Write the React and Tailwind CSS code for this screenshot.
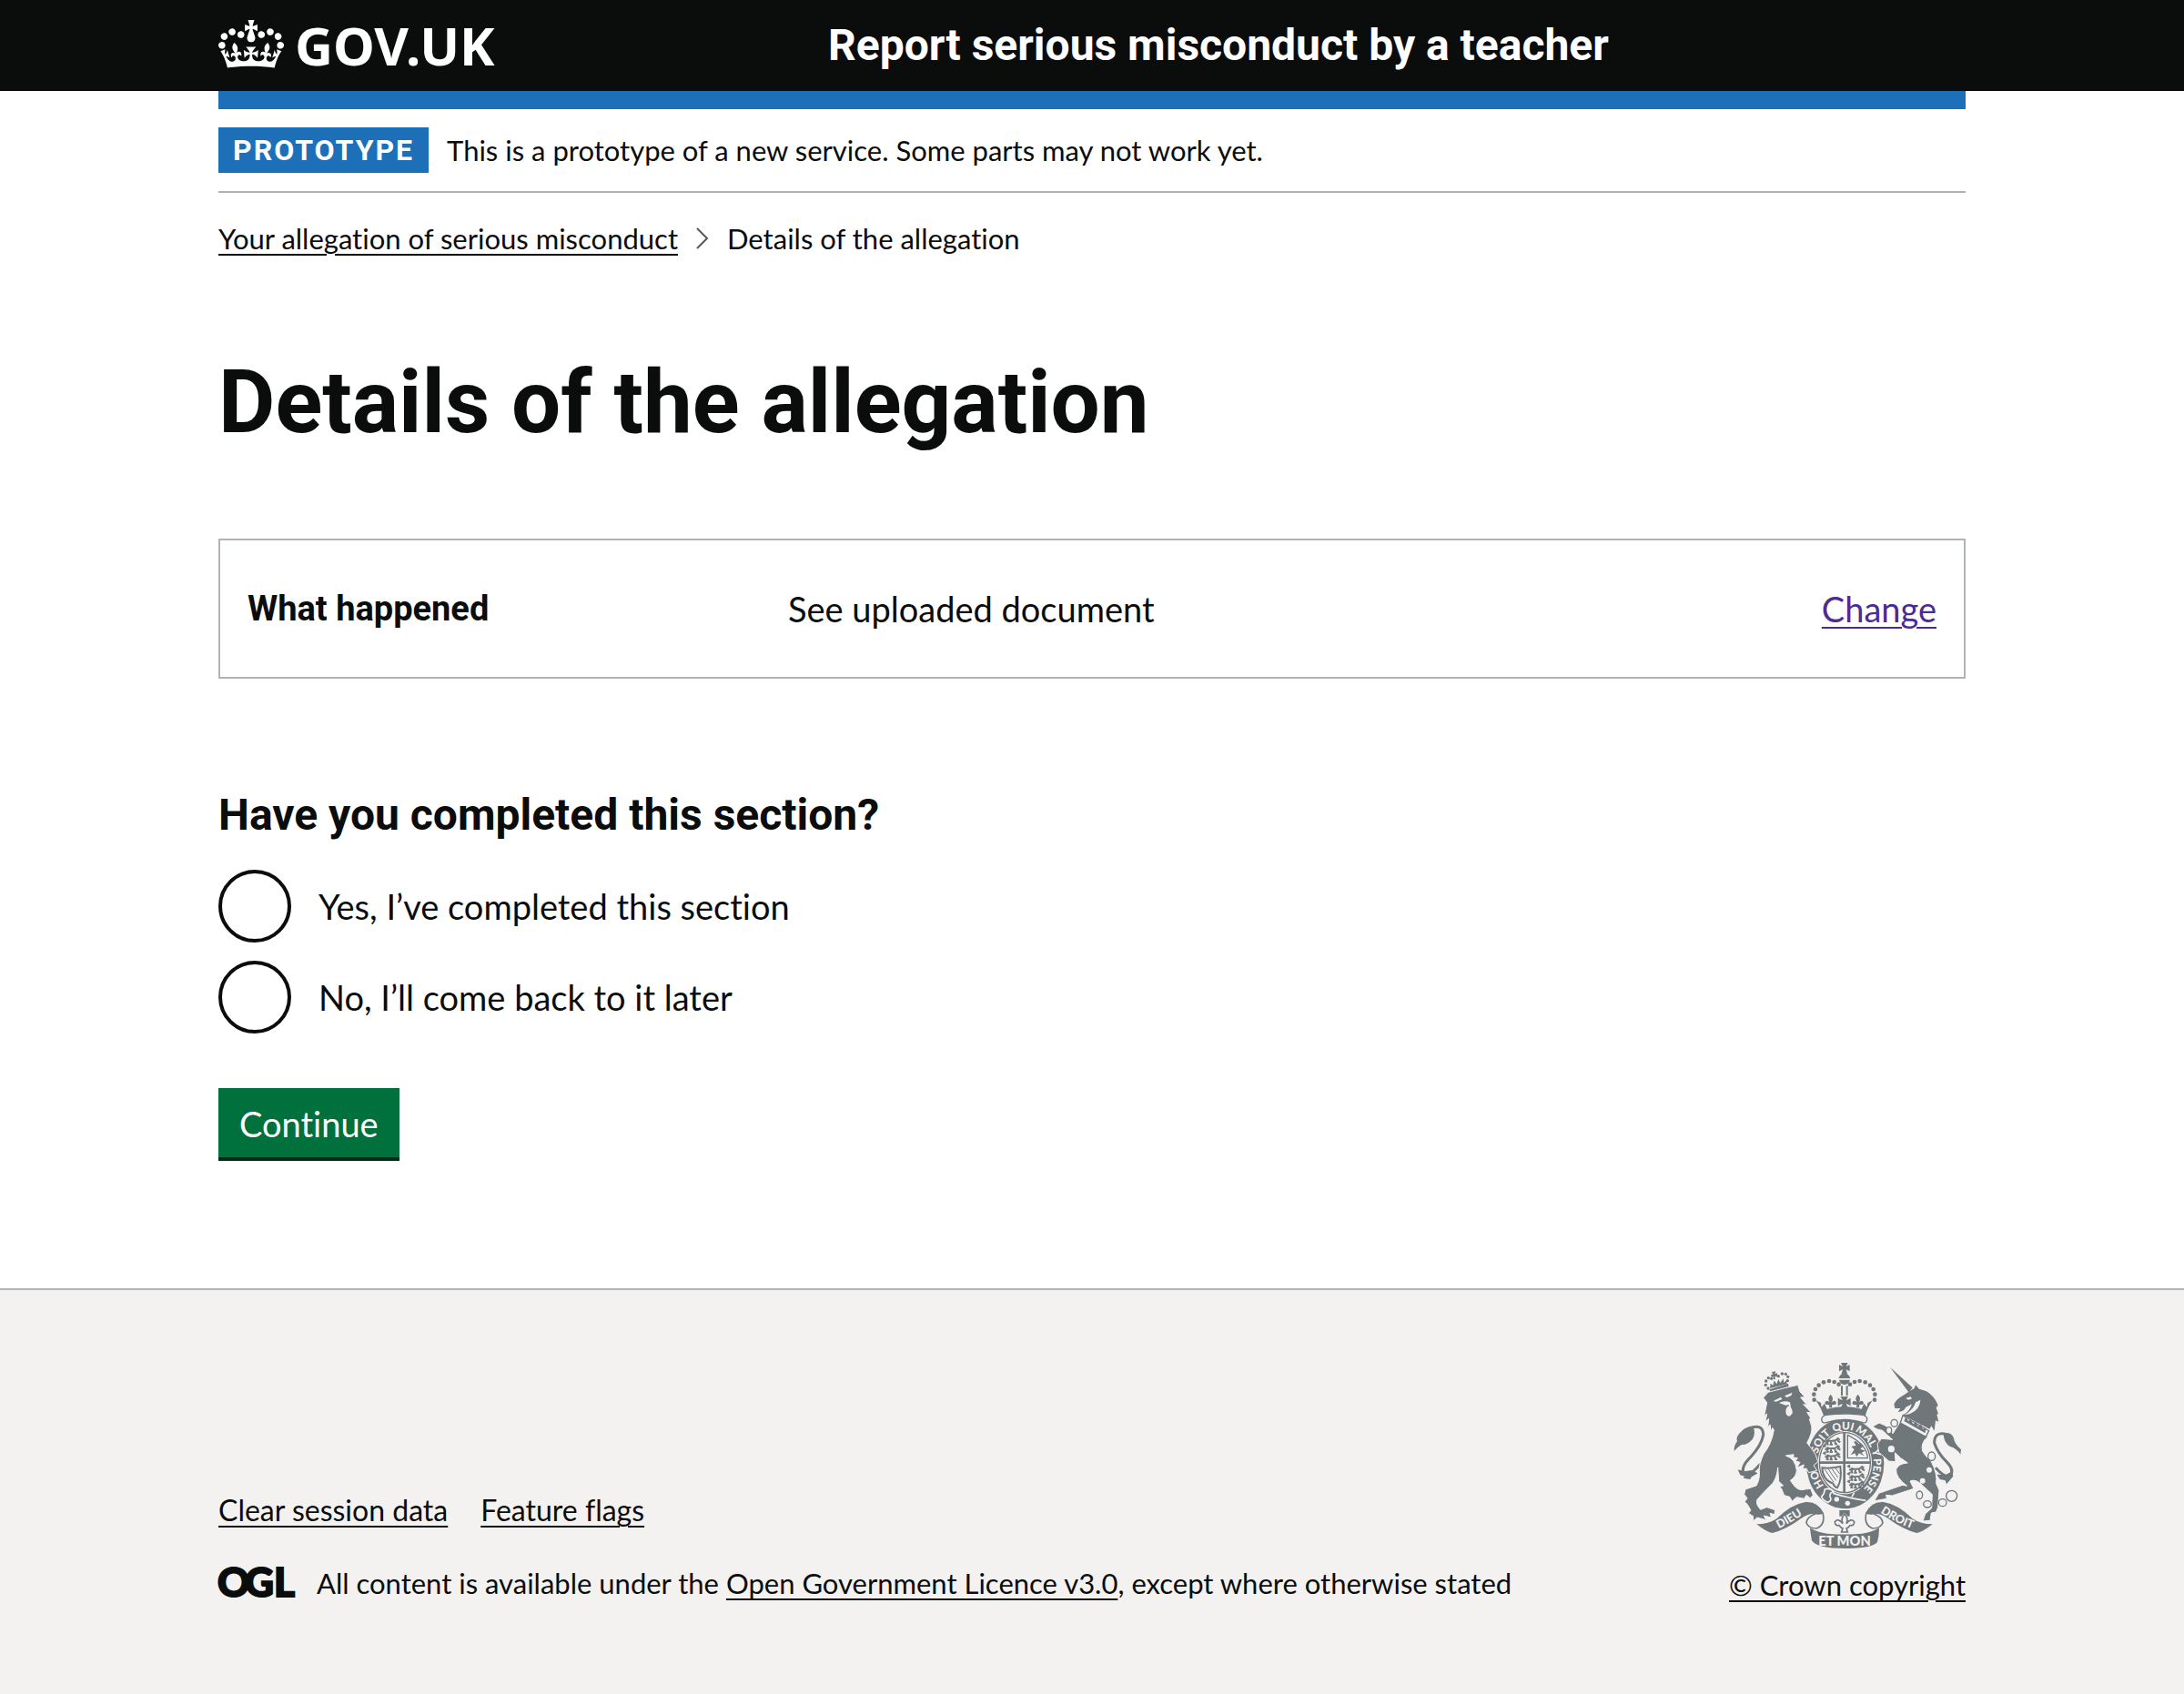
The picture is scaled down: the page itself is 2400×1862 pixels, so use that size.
import React from "react";

const LINK = "underline decoration-2 underline-offset-[5px]";
const INK = "#70777b";
const PAPER = "#f3f2f1";

function Crown() {
  return (
    <svg viewBox="0 0 132 97" className="mb-1 h-[53px] w-[72px] fill-white" aria-hidden="true">
      <path
        fillRule="evenodd"
        d="M25 30.2c3.5 1.5 7.7-.2 9.1-3.7 1.5-3.6-.2-7.8-3.9-9.2-3.6-1.4-7.6.3-9.1 3.9-1.4 3.5.3 7.5 3.9 9zM9 39.5c3.6 1.5 7.8-.2 9.2-3.7 1.5-3.6-.2-7.8-3.9-9.1-3.6-1.5-7.6.2-9.1 3.8-1.4 3.5.3 7.5 3.8 9zM4.4 57.2c3.5 1.5 7.7-.2 9.1-3.8 1.5-3.6-.2-7.7-3.9-9.1-3.5-1.5-7.6.3-9.1 3.8-1.4 3.5.3 7.6 3.9 9.1zm38.3-21.4c3.5 1.5 7.7-.2 9.1-3.8 1.5-3.6-.2-7.7-3.9-9.1-3.6-1.5-7.6.3-9.1 3.8-1.3 3.6.4 7.7 3.9 9.1zm64.4-5.6c-3.6 1.5-7.8-.2-9.1-3.7-1.5-3.6.2-7.8 3.8-9.2 3.6-1.4 7.7.3 9.2 3.9 1.3 3.5-.4 7.5-3.9 9zm15.9 9.3c-3.6 1.5-7.7-.2-9.1-3.7-1.5-3.6.2-7.8 3.7-9.1 3.6-1.5 7.7.2 9.2 3.8 1.5 3.5-.3 7.5-3.8 9zm4.7 17.7c-3.6 1.5-7.8-.2-9.2-3.8-1.5-3.6.2-7.7 3.9-9.1 3.6-1.5 7.7.3 9.2 3.8 1.3 3.5-.4 7.6-3.9 9.1zM89.3 35.8c-3.6 1.5-7.8-.2-9.2-3.8-1.4-3.6.2-7.7 3.9-9.1 3.6-1.5 7.7.3 9.2 3.8 1.4 3.6-.3 7.7-3.9 9.1zM69.7 17.7l8.9 4.7V9.3l-8.9 2.8c-.2-.3-.5-.6-.9-.9L72.4 0H59.6l3.5 11.2c-.3.3-.6.5-.9.9l-8.8-2.8v13.1l8.8-4.7c.3.3.6.7.9.9l-5 15.4v.1c-.2.8-.4 1.6-.4 2.4 0 4.1 3.1 7.5 7 8.1h.2c.3 0 .7.1 1 .1.4 0 .7 0 1-.1h.2c4-.6 7.1-4.1 7.1-8.1 0-.8-.1-1.7-.4-2.4V34l-5.1-15.4c.4-.2.7-.6 1-.9zM66 92.8c16.9 0 32.8 1.1 47.1 3.2 4-16.9 8.9-26.7 14-33.5l-9.6-3.4c1 4.9 1.1 7.2 0 10.2-1.5-1.4-3-4.3-4.2-8.7L108.6 76c2.8-2 5-3.2 7.5-3.3-4.4 9.4-10 11.9-13.6 11.2-4.3-.8-6.3-4.6-5.6-7.9 1-4.7 5.7-5.9 8-.5 4.3-8.7-3-11.4-7.6-8.8 7.1-7.2 7.9-13.5 2.1-21.1-8 6.1-8.1 12.3-4.5 20.8-4.7-5.4-12.1-2.5-9.5 6.2 3.4-5.2 7.9-2 7.2 3.1-.6 4.3-6.4 7.8-13.5 7.2-10.3-.9-10.9-8-11.2-13.8 2.5-.5 7.1 1.8 11 7.3L80.2 60c-4.1 4.4-8 5.3-12.3 5.4 1.4-4.4 8-11.6 8-11.6H55.5s6.4 7.2 7.9 11.6c-4.2-.1-8-1-12.3-5.4l1.4 16.4c3.9-5.5 8.5-7.7 10.9-7.3-.3 5.8-.9 12.8-11.1 13.8-7.2.6-12.9-2.9-13.5-7.2-.7-5 3.8-8.3 7.1-3.1 2.7-8.7-4.6-11.6-9.4-6.2 3.7-8.5 3.6-14.7-4.6-20.8-5.8 7.6-5 13.9 2.2 21.1-4.7-2.6-11.9.1-7.7 8.8 2.3-5.5 7.1-4.2 8.1.5.7 3.3-1.3 7.1-5.7 7.9-3.5.7-9-1.8-13.5-11.2 2.5.1 4.7 1.3 7.5 3.3l-4.7-15.4c-1.2 4.4-2.7 7.2-4.3 8.7-1.1-3-.9-5.3 0-10.2l-9.5 3.4c5 6.9 9.9 16.7 14 33.5 14.8-2.1 30.8-3.2 47.7-3.2z"
      />
    </svg>
  );
}

const CROWN_BEADS = [
  [338, 176], [337, 158], [342, 141], [353, 128], [369, 118], [387, 114], [404, 117], [419, 125],
];
const SMALL_BEADS = [
  [186, 138], [178, 127], [179, 114], [187, 104], [197, 106], [220, 98], [232, 90], [244, 91], [251, 100], [250, 113],
];
const RINGS = [
  [602, 253, 11, 12], [584, 277, 9, 11], [592, 338, 13, 13], [725, 362, 12, 14],
  [685, 490, 10, 13], [711, 520, 13, 11], [761, 515, 13, 12], [791, 493, 18, 18],
];
const LION_ROWS = [300, 325, 350];

function Fleur({ x, y }) {
  return (
    <path
      transform={`translate(${x} ${y})`}
      d="M0 -20 Q13 -6 3 6 Q14 -4 19 8 Q18 16 10 13 Q8 16 4 14 L5 24 L-5 24 L-4 14 Q-8 16 -10 13 Q-18 16 -19 8 Q-14 -4 -3 6 Q-13 -6 0 -20Z"
    />
  );
}

function Passant({ x, y }) {
  return (
    <path
      transform={`translate(${x} ${y})`}
      fill="none"
      stroke={INK}
      strokeWidth="6"
      d="M0 4 L8 -3 L18 0 L34 -2 L42 -9 L48 -4 M10 0 L6 10 L12 11 M20 2 L18 11 L25 11 M32 0 L34 10 L40 10 M40 -2 L50 4 M2 -6 L-4 -10 L2 -14"
    />
  );
}

function RoyalArms() {
  return (
    <svg viewBox="72 54 750 612" className="h-[204px] w-[250px]" fill={INK} aria-hidden="true">
      {/* lion's tail and crown */}
      <path d="M74 345 Q72 330 84 312 Q78 298 98 280 Q112 262 137 266 Q146 285 135 305 Q118 325 98 324 Q85 332 74 345Z" />
      <path d="M122 270 Q170 252 170 292 Q165 325 128 365 Q92 400 108 422 Q125 430 160 388" fill="none" stroke={INK} strokeWidth="9" />
      <path d="M86 406 L108 412 L132 408 L152 418 L132 430 L126 438 L104 434 L108 428 L94 424Z" />
      <path d="M190 142 L252 122 L254 132 L194 152Z" />
      <path d="M192 138 L194 122 L202 128 L206 112 L214 124 L220 108 L226 120 L236 106 L238 120 L246 112 L248 124Z" />
      <path d="M198 84 L211 82 L208 90 L216 88 L216 100 L208 98 L210 108 L203 108 L203 99 L196 102 L196 92 L202 92Z" />
      {SMALL_BEADS.map(([x, y]) => <circle key={x} cx={x} cy={y} r="5" />)}
      {/* central crown */}
      <path d="M426 54 L449 54 L443 66 L455 60 L455 82 L443 76 L447 90 L428 90 L432 76 L420 82 L420 60 L432 66Z" />
      <path d="M418 105 Q424 90 437 88 Q452 90 457 105Z" />
      <path d="M420 110 H456 Q453 124 437 126 Q423 124 420 110Z" />
      <path d="M426 130 H432 V162 H426Z M443 130 H449 V162 H443Z" />
      <path d="M424 165 L450 165 L443 178 L458 170 L458 196 L443 188 L450 204 L424 204 L432 188 L416 196 L416 170 L432 178Z" />
      {CROWN_BEADS.map(([x, y]) => (
        <g key={y}>
          <circle cx={x} cy={y} r="7" />
          <circle cx={875 - x} cy={y} r="7" />
        </g>
      ))}
      <Fleur x={392} y={178} />
      <Fleur x={482} y={178} />
      <path d="M344 178 L360 186 L362 200 L372 188 L380 206 Q437 190 494 206 L502 188 L512 200 L514 186 L530 178 Q512 205 506 230 Q437 212 370 230 Q362 205 344 178Z" />
      {/* garter */}
      <ellipse cx="440" cy="386" rx="128" ry="149" />
      <path d="M376 226 Q437 218 500 226 Q514 232 512 242 Q510 256 496 250 Q437 232 380 250 Q364 256 362 242 Q362 230 376 226Z" fill={PAPER} stroke={INK} strokeWidth="4" />
      <ellipse cx="439" cy="383" rx="89" ry="104" fill={PAPER} />
      <ellipse cx="439" cy="383" rx="84" ry="99" fill="none" stroke={INK} strokeWidth="4" />
      <path d="M437 284 V482 M354 383 H524" stroke={INK} strokeWidth="8" />
      {LION_ROWS.map((y) => (
        <g key={y}>
          <Passant x={374} y={y + 12} />
          <Passant x={454} y={y + 105} />
        </g>
      ))}
      <path d="M448 292 V368 H514 Q512 322 448 292Z" fill="none" stroke={INK} strokeWidth="4" />
      <path d="M458 358 L470 340 L460 330 L476 326 L468 314 L476 312 L486 322 L490 318 L500 328 L490 338 L506 344 L494 350 L504 362 L486 352 L478 364 L472 352Z" />
      <path d="M364 400 Q390 404 424 396 Q430 440 414 466 Q404 464 400 452 Q366 440 364 400Z" fill="none" stroke={INK} strokeWidth="6" />
      <path d="M372 404 L402 448 M384 404 L410 442 M396 403 L416 432 M408 401 L422 420" stroke={INK} strokeWidth="3" />
      <g fill={PAPER} fontFamily="Lato, sans-serif" fontWeight="900" fontSize="35" textAnchor="middle">
        <path id="garter-band" fill="none" d="M440 496 A94 111 0 0 1 440 274 A94 111 0 0 1 440 496" />
        <text><textPath href="#garter-band" startOffset="17%">HO</textPath></text>
        <text><textPath href="#garter-band" startOffset="36%">SOIT</textPath></text>
        <text><textPath href="#garter-band" startOffset="49%">QUI</textPath></text>
        <text><textPath href="#garter-band" startOffset="61%">MAL</textPath></text>
        <text><textPath href="#garter-band" startOffset="70%">Y</textPath></text>
        <text><textPath href="#garter-band" startOffset="81%">PENSE</textPath></text>
      </g>
      <path d="M400 484 Q450 500 508 508 M462 496 L470 482" stroke={PAPER} strokeWidth="5" fill="none" />
      <circle cx="412" cy="504" r="8" fill={PAPER} />
      <circle cx="448" cy="517" r="8" fill={PAPER} />
      <path d="M372 472 Q390 464 402 480 Q388 480 390 496 Q398 506 384 514 Q364 508 362 494 Q372 488 372 472Z" stroke={PAPER} strokeWidth="5" />
      {/* lion */}
      <path
        stroke={PAPER}
        strokeWidth="3"
        d="M170 169 L186 151 L240 137 L284 127 L291 149 L307 167 L293 168 L314 193 L302 191 L329 219 L314 217 L328 239 L322 239 L329 262 Q334 282 314 318 Q334 340 343 358 L350 380 L336 392 L347 409 L320 416 L312 402 L300 404 L304 390 L281 400 L291 382 L276 378 L283 368 L269 366 L270 356 L244 360 Q277 370 280 410 Q278 430 259 442 L274 462 Q290 478 308 471 L326 469 L334 490 L325 500 L312 490 L305 502 L280 497 L265 510 L257 496 L239 491 L231 471 L224 461 L236 459 L221 445 L218 399 Q215 432 201 451 Q162 490 150 505 Q144 520 161 538 L182 530 L209 539 L207 554 L192 550 L197 564 L172 558 L179 572 L150 564 L136 576 L137 560 L121 550 L129 540 L117 520 L109 512 L117 500 L107 488 L111 471 L147 459 Q159 440 157 410 Q155 390 171 355 Q198 320 205 275 L200 268 L194 284 L193 258 L185 266 L188 238 L177 248 L182 222 L173 230 L182 185Z"
      />
      <g fill={PAPER}>
        <path d="M203 180 L228 167 L232 174 L212 182Z" />
        <path d="M240 163 L266 152 L262 162 L248 168Z" />
        <path d="M222 186 Q240 176 258 184 L262 206 L258 206 L254 192 L244 194 L232 190Z" />
        <path d="M252 196 Q268 204 266 220 Q256 238 246 224 Q240 210 252 196Z" />
      </g>
      {/* unicorn */}
      <path d="M588 68 L662 136 L650 152Z" />
      <path d="M648 150 L668 138 L672 127 L684 140 Q712 146 722 158 Q738 172 746 194 L740 202 L747 222 L742 224 L748 248 L738 244 L734 278 L724 262 L718 272 L640 232 L628 226 Q650 220 660 190 L640 200 Q634 214 614 216 L622 204 L604 204 L601 190 Q610 172 634 160Z" />
      <path d="M688 176 Q688 206 654 222 L636 226 Q668 206 672 184Z M640 170 L656 166 L660 172 L648 176Z" fill={PAPER} />
      <path
        stroke={PAPER}
        strokeWidth="3"
        d="M624 244 L712 298 Q688 318 695 345 Q704 362 723 378 Q745 420 740 452 L750 474 L746 530 L740 546 L724 549 L720 574 L696 576 L704 552 L725 533 L727 488 L697 460 Q672 434 654 444 L666 469 L595 492 L575 490 L577 502 L536 509 L551 484 L630 457 L644 460 Q606 432 608 405 Q616 386 646 384 Q620 368 604 350 L606 380 L584 378 L551 349 L546 321 L560 304 L596 307 L577 290 L563 277 L546 273 L530 264 L552 252 L573 261 L597 287 Q608 270 624 244Z"
      />
      <path d="M630 228 L716 278 L706 298 L622 252Z" fill={PAPER} stroke={INK} strokeWidth="4" />
      <path d="M634 246 L640 232 L648 246 L656 240 L664 256 L674 248 L680 264 L690 256 L696 272 L706 268 L704 286Z" />
      <g stroke={INK} strokeWidth="4" fill={PAPER}>
        {RINGS.map(([x, y, rx, ry]) => <ellipse key={x} cx={x} cy={y} rx={rx} ry={ry} />)}
      </g>
      <circle cx="717" cy="407" r="9" fill={PAPER} />
      <circle cx="695" cy="443" r="9" fill={PAPER} />
      <path d="M776 290 Q734 278 734 318 Q744 350 774 380 Q802 408 786 428 Q768 434 738 400" fill="none" stroke={INK} strokeWidth="9" />
      <path d="M764 286 Q790 280 798 302 Q800 320 822 340 L820 356 Q808 336 786 330 Q764 318 764 286Z" />
      <path d="M742 422 L770 424 L792 412 L796 428 L786 440 L774 454 L770 442 L752 438Z" />
      {/* pendant lily */}
      <path d="M421 540 H455 V560 L449 560 L438 548 L427 560 L421 560Z" />
      <path d="M438 552 Q452 566 444 584 Q460 564 470 578 Q470 592 456 590 Q450 598 444 600 L448 612 H428 L432 600 Q426 598 420 590 Q406 592 406 578 Q416 564 432 584 Q424 566 438 552Z" fill="none" stroke={INK} strokeWidth="5" />
      {/* motto ribbon */}
      <g id="ribbon-half">
        <path d="M148 586 Q188 586 214 568 Q262 520 310 513 Q350 510 369 550 Q354 558 340 552 Q318 550 296 566 Q244 604 200 615 Q180 612 148 586Z" />
        <path d="M366 548 Q376 588 346 600 Q320 600 312 582 Q314 562 342 552" fill="none" stroke={INK} strokeWidth="5" />
      </g>
      <use href="#ribbon-half" transform="translate(876 0) scale(-1 1)" />
      <path d="M324 598 Q350 614 380 617 Q437 622 496 617 Q526 614 552 598 Q552 625 546 645 Q530 666 438 666 Q346 666 330 640 Q326 620 324 598Z" />
      <g fill={PAPER} fontFamily="Lato, sans-serif" fontWeight="900" textAnchor="middle">
        <path id="ribbon-left" fill="none" d="M206 608 Q256 586 320 541" />
        <path id="ribbon-right" fill="none" d="M542 538 Q610 586 676 606" />
        <text fontSize="38"><textPath href="#ribbon-left" startOffset="47%">DIEU</textPath></text>
        <text fontSize="38"><textPath href="#ribbon-right" startOffset="50%">DROIT</textPath></text>
        <text x="438" y="656" fontSize="44">ET MON</text>
      </g>
    </svg>
  );
}

function OglMark() {
  return (
    <svg viewBox="0 0 82 44" className="h-11 w-[82px] shrink-0 overflow-visible" role="img" aria-label="Open Government Licence">
      <text x="-1 29 61" y="37" fill="#0b0c0c" stroke="#0b0c0c" strokeWidth="2" fontFamily="Lato, sans-serif" fontWeight="900" fontSize="44">
        OGL
      </text>
    </svg>
  );
}

function Radio({ id, children }) {
  return (
    <div className="flex items-center gap-[30px]">
      <input
        type="radio"
        name="completed"
        id={id}
        className="size-20 shrink-0 appearance-none rounded-full border-4 border-[#0b0c0c] checked:bg-[#0b0c0c] checked:shadow-[inset_0_0_0_16px_white]"
      />
      <label htmlFor={id} className="text-[38px]/[50px]">
        {children}
      </label>
    </div>
  );
}

const BOLD = "font-['Roboto',sans-serif] font-bold";
const WRAP = "mx-auto w-4/5 max-w-[1920px]";

export default function App() {
  return (
    <div className="flex min-h-screen flex-col bg-[#f3f2f1] font-['Lato',sans-serif] text-[31px]/[40px] text-[#0b0c0c] [font-variant-ligatures:none]">
      <header className="bg-[#0b0c0c] text-white">
        <div className={`${WRAP} flex h-[100px] items-center`}>
          <a href="#home" className="flex w-[670px] items-center gap-3">
            <Crown />
            <span className="font-['Noto_Sans',sans-serif] text-[58px]/[60px] font-bold">GOV.UK</span>
          </a>
          <a href="#service" className={`${BOLD} text-[48px]/[60px]`}>
            Report serious misconduct by a teacher
          </a>
        </div>
      </header>

      <div className="bg-white">
        <div className={WRAP}>
          <div className="h-5 bg-[#1d70b8]" />
          <div className="flex items-center gap-5 border-b-2 border-[#b1b4b6] py-5">
            <strong className={`${BOLD} bg-[#1d70b8] px-4 py-[5px] text-[32px]/[40px] tracking-[2px] text-white`}>PROTOTYPE</strong>
            <p>This is a prototype of a new service. Some parts may not work yet.</p>
          </div>

          <nav aria-label="Breadcrumb" className="pt-[30px]">
            <ol className="flex items-center">
              <li>
                <a href="#allegation" className={LINK}>Your allegation of serious misconduct</a>
              </li>
              <li className="flex items-center">
                <svg viewBox="0 0 14 24" className="mx-5 h-6 w-[14px]" fill="none" stroke="#505a5f" strokeWidth="2" aria-hidden="true">
                  <path d="M1 1 L12 12 L1 23" />
                </svg>
                Details of the allegation
              </li>
            </ol>
          </nav>

          <main className="pt-[110px] pb-36">
            <h1 className={`${BOLD} text-[96px]/[100px]`}>Details of the allegation</h1>

            <dl className="mt-[100px] flex border-2 border-[#b1b4b6] px-[30px] py-[50px] text-[38px]/[50px]">
              <dt className={`${BOLD} w-[32%]`}>What happened</dt>
              <dd className="grow">See uploaded document</dd>
              <dd>
                <a href="#change" className={`${LINK} text-[#4c2c92]`}>Change</a>
              </dd>
            </dl>

            <form onSubmit={(e) => e.preventDefault()}>
              <fieldset className="mt-[120px]">
                <legend className={`${BOLD} text-[48px]/[60px]`}>Have you completed this section?</legend>
                <div className="mt-[30px] flex flex-col gap-5">
                  <Radio id="completed-yes">Yes, I’ve completed this section</Radio>
                  <Radio id="completed-no">No, I’ll come back to it later</Radio>
                </div>
              </fieldset>
              <button type="submit" className="mt-[60px] bg-[#00703c] px-[23px] pt-[14px] pb-[12px] text-[38px]/[50px] text-white shadow-[0_4px_0_#002d18]">
                Continue
              </button>
            </form>
          </main>
        </div>
      </div>

      <footer className="grow border-t-2 border-[#b1b4b6]">
        <div className={`${WRAP} flex items-end justify-between pt-20`}>
          <div>
            <ul className="flex gap-[36px] text-[32px]/[40px]">
              <li><a href="#clear" className={LINK}>Clear session data</a></li>
              <li><a href="#flags" className={LINK}>Feature flags</a></li>
            </ul>
            <div className="mt-[38px] flex items-center gap-[26px]">
              <OglMark />
              <p>
                All content is available under the{" "}
                <a href="#licence" className={LINK}>Open Government Licence v3.0</a>, except where otherwise stated
              </p>
            </div>
          </div>
          <a href="#copyright" className="flex flex-col items-center gap-5">
            <RoyalArms />
            <span className={LINK}>© Crown copyright</span>
          </a>
        </div>
      </footer>
    </div>
  );
}
